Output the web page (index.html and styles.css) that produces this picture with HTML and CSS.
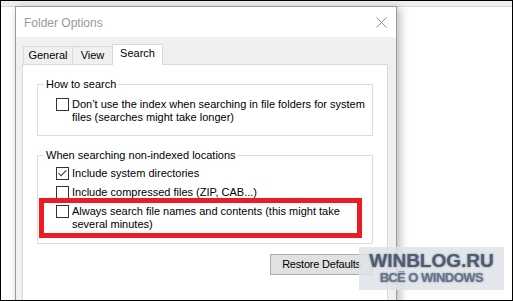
FILE: index.html
```html
<!DOCTYPE html>
<html>
<head>
<meta charset="utf-8">
<title>Folder Options</title>
<link rel="stylesheet" href="styles.css">
</head>
<body>
<div class="screen">
  <div class="bgbar"></div>
  <div class="dialog">
    <div class="titlebar">
      <span class="title">Folder Options</span>
      <svg class="close" width="11" height="11" viewBox="0 0 11 11"><path d="M0.5 0.5L10.5 10.5M10.5 0.5L0.5 10.5" stroke="#8e8e8e" stroke-width="1" fill="none"/></svg>
    </div>
    <div class="body">
      <div class="tabs">
        <div class="tab t-general">General</div>
        <div class="tab t-view">View</div>
        <div class="tab t-search active">Search</div>
      </div>
      <div class="panel">
        <fieldset class="group g1">
          <legend>How to search</legend>
          <div class="opt"><span class="cb"></span><span class="lbl">Don’t use the index when searching in file folders for system<br>files (searches might take longer)</span></div>
        </fieldset>
        <fieldset class="group g2">
          <legend>When searching non-indexed locations</legend>
          <div class="opt"><span class="cb"><svg width="11" height="11" viewBox="0 0 11 11"><path d="M1.5 5L4 7.8L9.3 2.3" stroke="#333" stroke-width="1.1" fill="none"/></svg></span><span class="lbl">Include system directories</span></div>
          <div class="opt"><span class="cb"></span><span class="lbl">Include compressed files (ZIP, CAB...)</span></div>
          <div class="opt hl"><span class="cb"></span><span class="lbl">Always search file names and contents (this might take<br>several minutes)</span><span class="redbox"></span></div>
        </fieldset>
        <div class="actions"><button class="btn">Restore Defaults</button></div>
      </div>
    </div>
  </div>
  <div class="watermark"><div class="wm1">WINBLOG.RU</div><div class="wm2">ВСЁ О WINDOWS</div></div>
</div>
</body>
</html>
```
FILE: styles.css
```css
* { box-sizing: border-box; }
html, body { margin: 0; padding: 0; }
body {
  width: 513px;
  height: 301px;
  overflow: hidden;
  background: #fff;
  font-family: "Liberation Sans", Arial, sans-serif;
  font-size: 11px;
  color: #000;
}
.screen {
  position: relative;
  width: 513px;
  height: 301px;
  border: 1px solid #000;
  background: #fff;
  overflow: hidden;
}
.bgbar {
  height: 6px;
  background: #f0f0f0;
  border-bottom: 1px solid #d7d7d7;
}
.dialog {
  margin: -1px 0 0 14px;
  width: 382px;
  height: 320px;
  border: 1px solid #9b9b9b;
  background: #f0f0f0;
  box-shadow: 3px 2px 9px rgba(0, 0, 0, 0.28);
  display: flex;
  flex-direction: column;
  position: relative;
}
.titlebar {
  height: 30px;
  background: #fff;
  display: flex;
  align-items: center;
  justify-content: space-between;
  padding: 0 9px 0 8px;
  flex: none;
}
.title {
  font-size: 12px;
  color: #999;
  line-height: 30px;
  padding-top: 1px;
}
.close { display: block; }
.body {
  flex: 1;
  display: flex;
  flex-direction: column;
  padding: 7px 8px 0 6px;
}
.tabs {
  display: flex;
  align-items: flex-end;
  height: 20px;
  padding-left: 1px;
}
.tab {
  border: 1px solid #d9d9d9;
  border-bottom: none;
  background: #f0f0f0;
  height: 18px;
  line-height: 17px;
  text-align: center;
}
.t-general { width: 50px; }
.t-view { width: 41px; margin-left: -1px; }
.t-search {
  width: 51px;
  margin-left: -1px;
  height: 21px;
  margin-bottom: -1px;
  line-height: 17px;
  background: #fff;
  position: relative;
  z-index: 2;
}
.panel {
  flex: 1;
  background: #fff;
  border: 1px solid #d9d9d9;
  padding: 12px 14px 0 14px;
}
.group {
  margin: 0;
  min-width: 0;
  border: 1px solid #dcdcdc;
  padding: 7px 4px 11px 18px;
}
.group legend {
  padding: 0 2px;
  margin-left: -12px;
  line-height: 14px;
  font-size: 11px;
}
.g2 {
  margin-top: 12px;
  padding-top: 5px;
  padding-bottom: 12px;
}
.opt {
  display: flex;
  align-items: flex-start;
  line-height: 13px;
}
.lbl { white-space: nowrap; }
.opt + .opt { margin-top: 6px; }
.cb {
  flex: none;
  width: 13px;
  height: 13px;
  border: 1px solid #333;
  background: #fff;
  margin-right: 3px;
}
.cb svg { display: block; }
.hl { position: relative; }
.redbox {
  position: absolute;
  left: -17px;
  top: -7px;
  width: 323px;
  height: 40px;
  border: 5px solid #ed1c24;
}
.actions {
  display: flex;
  justify-content: flex-end;
  margin-top: 10px;
}
.btn {
  width: 103px;
  height: 21px;
  padding: 0;
  background: #e1e1e1;
  border: 1px solid #adadad;
  font-family: "Liberation Sans", Arial, sans-serif;
  font-size: 11px;
  letter-spacing: -0.2px;
  color: #000;
  line-height: 19px;
}
.watermark {
  position: absolute;
  left: 358px;
  top: 246px;
  width: 145px;
  height: 43px;
  background: rgba(222, 227, 233, 0.85);
  text-align: center;
  font-family: "Liberation Sans", Arial, sans-serif;
  font-weight: bold;
}
.wm1 {
  font-size: 19px;
  line-height: 19px;
  padding-top: 4px;
  color: #4f5c72;
  text-shadow: 0 0 2px rgba(79, 92, 114, 0.8);
}
.wm2 {
  font-size: 13px;
  line-height: 13px;
  margin-top: 1px;
  letter-spacing: -0.5px;
  color: #67748a;
  text-shadow: 0 0 2px rgba(103, 116, 138, 0.8);
}
```
